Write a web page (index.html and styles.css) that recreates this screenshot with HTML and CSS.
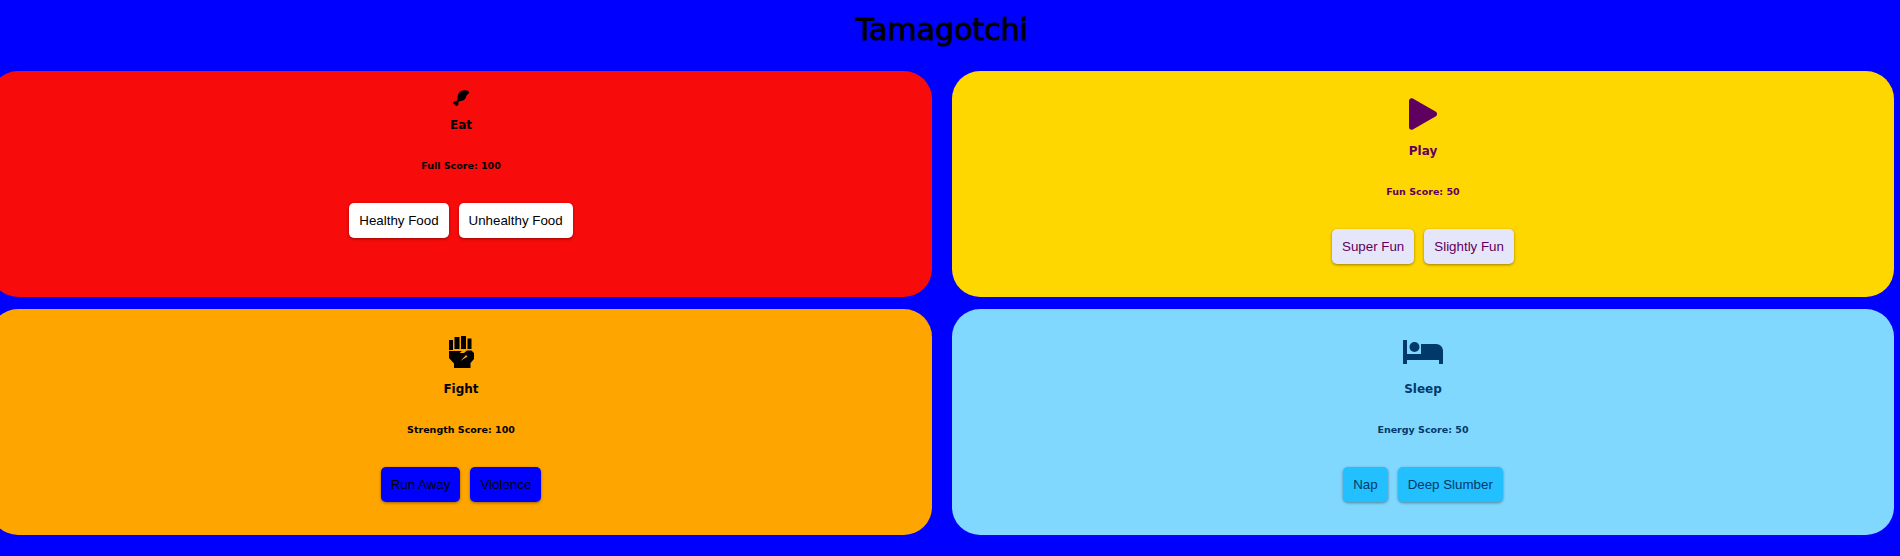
FILE: index.html
```html
<!DOCTYPE html>
<html lang="en">
<head>
    <meta charset="UTF-8">
    <meta name="viewport" content="width=device-width, initial-scale=1.0">
    <title>Tamagotchi</title>
    <link rel="stylesheet" href="styles.css">
</head>
<body>

    <h1 class="title">Tamagotchi</h1>

    <div class="grid">
        <section class="card eat">
            <div class="icon small">
                <svg width="16" height="16" viewBox="0 0 16 16" fill="currentColor"><path d="M6 2.500C8 .3 13 -.3 15 .8c1.200 .7 1.200 2.200 .5 2.900-1.300 .5-2 1.500-2.500 3.300C12.300 9.800 9.500 11.300 7 11L5.300 12.500C5.800 14 5 16 3.500 16 2.500 16 2.200 15.200 2.500 14.300 1.300 14.700 0 14 0 13c0-1.200 1.500-2 3-1.600L4.500 9.500C4.500 7 4.700 4.500 6 2.500Z"/></svg>
            </div>
            <h2 class="name">Eat</h2>
            <p class="score">Full Score: 100</p>
            <div class="actions">
                <button type="button">Healthy Food</button>
                <button type="button">Unhealthy Food</button>
            </div>
        </section>

        <section class="card play">
            <div class="icon">
                <svg width="28" height="32" viewBox="0 0 28 32" fill="currentColor"><path d="M0 3C0 .8 1.800 -.5 3.800 .6L26.500 13.500C28.500 14.700 28.500 17.300 26.500 18.500L3.800 31.400C1.800 32.500 0 31.200 0 29Z"/></svg>
            </div>
            <h2 class="name">Play</h2>
            <p class="score">Fun Score: 50</p>
            <div class="actions">
                <button type="button">Super Fun</button>
                <button type="button">Slightly Fun</button>
            </div>
        </section>

        <section class="card fight">
            <div class="icon">
                <svg width="25" height="32" viewBox="0 0 25 32" fill="currentColor"><path d="M0 4H4V14H0ZM5.500 1H10.500V13H5.500ZM12 0H17V13H12ZM18.500 2.500H22.500V13H18.500Z"/><path d="M0 15H13L10.500 17H15L18 14.500H22.500L25 17V23L21.500 27V32H5V27.500L0 22ZM17 19 11.500 25 18.500 20.500Z" fill-rule="evenodd"/></svg>
            </div>
            <h2 class="name">Fight</h2>
            <p class="score">Strength Score: 100</p>
            <div class="actions">
                <button type="button">Run Away</button>
                <button type="button">Violence</button>
            </div>
        </section>

        <section class="card sleep">
            <div class="icon">
                <svg width="40" height="24" viewBox="0 0 40 24" fill="currentColor"><path d="M0 0H4V14H18V4H33C37 4 40 7 40 11V24H36V20H4V24H0Z"/><circle cx="11.500" cy="7" r="5"/></svg>
            </div>
            <h2 class="name">Sleep</h2>
            <p class="score">Energy Score: 50</p>
            <div class="actions">
                <button type="button">Nap</button>
                <button type="button">Deep Slumber</button>
            </div>
        </section>
    </div>

</body>
</html>
```

FILE: styles.css
```css
body {
    margin: 0;
    background-color: #0000ff;
    font-family: "Comic Sans MS", "DejaVu Sans", sans-serif;
    overflow: hidden;
}

.title {
    margin: 0 6px 0 -10px;
    height: 71px;
    padding-top: 8px;
    box-sizing: border-box;
    font-size: 30px;
    line-height: 44px;
    font-weight: 400;
    -webkit-text-stroke: 1px #000;
    text-align: center;
    color: #000;
}

.grid {
    display: grid;
    grid-template-columns: 1fr 1fr;
    grid-auto-rows: 226px;
    column-gap: 20px;
    row-gap: 12px;
    margin: 0 6px 0 -10px;
}

.card {
    display: flex;
    flex-direction: column;
    align-items: center;
    padding-top: 16px;
    border-radius: 28px;
}

.icon {
    display: flex;
    justify-content: center;
    align-items: center;
    height: 50px;
}

.icon svg {
    margin-top: 4px;
}

.icon.small {
    height: 24px;
}

.icon.small svg {
    margin-top: -2px;
}

.name {
    margin: 5px 0 0;
    font-size: 12px;
    line-height: 18px;
    font-weight: 700;
}

.score {
    margin: 26px 0 0;
    font-size: 9.5px;
    line-height: 12px;
    font-weight: 700;
}

.actions {
    display: flex;
    gap: 10px;
    margin-top: 31px;
}

button {
    height: 35px;
    padding: 0 10px;
    border: none;
    border-radius: 5px;
    font-family: "Liberation Sans", Arial, sans-serif;
    font-size: 13.33px;
    color: inherit;
    cursor: pointer;
    box-shadow: 0 1px 3px rgba(0, 0, 0, 0.4);
}

.eat {
    background-color: #f80b0b;
    color: #000;
}

.eat button {
    background-color: #fff;
}

.play {
    background-color: #ffd700;
    color: #5f0060;
}

.play button {
    background-color: #e6e6fa;
}

.fight {
    background-color: #ffa500;
    color: #000;
}

.fight button {
    background-color: #0000ff;
}

.sleep {
    background-color: #81d8ff;
    color: #01396b;
}

.sleep button {
    background-color: #22c0ff;
}
```
